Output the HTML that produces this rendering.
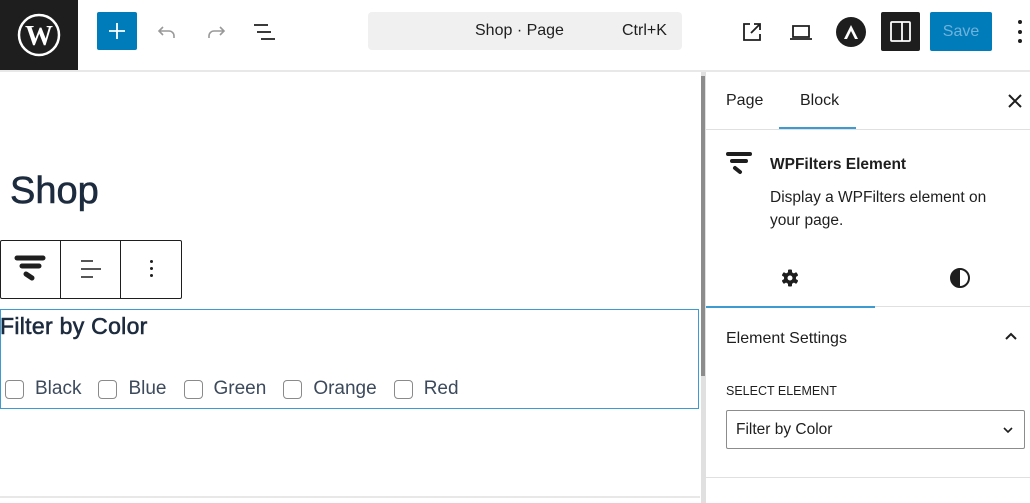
<!DOCTYPE html>
<html><head><style>
*{box-sizing:border-box;margin:0;padding:0}
body{width:1030px;height:503px;overflow:hidden;background:#fff;font-family:"Liberation Sans",sans-serif;color:#1e1e1e;position:relative}
.abs{position:absolute}
</style></head><body>
<!-- header -->
<div class="abs" style="left:0;top:0;width:78px;height:70px;background:#1e1e1e"></div>
<svg class="abs" style="left:17px;top:13px" width="44" height="44" viewBox="0 0 44 44"><circle cx="22" cy="22" r="20" fill="none" stroke="#fff" stroke-width="2.5"/><text x="22" y="32" text-anchor="middle" font-family="Liberation Serif" font-weight="bold" font-size="28" fill="#fff">W</text></svg>
<div class="abs" style="left:0;top:70px;width:1030px;height:2px;background:#e8e8e8"></div>
<div class="abs" style="left:97px;top:12px;width:40px;height:38px;background:#007cba;border-radius:2px"></div>
<svg class="abs" style="left:107px;top:21px" width="20" height="20" viewBox="0 0 20 20" stroke="#fff" stroke-width="1.8"><path d="M10 2v16M2 10h16"/></svg>
<svg class="abs" style="left:155px;top:20px" width="24" height="24" viewBox="0 0 24 24" fill="none" stroke="#999" stroke-width="1.6"><path d="M8 7l-4 4 4 4M4 11h10a5 5 0 0 1 5 5v2"/></svg>
<svg class="abs" style="left:204px;top:20px" width="24" height="24" viewBox="0 0 24 24" fill="none" stroke="#999" stroke-width="1.6"><path d="M16 7l4 4-4 4M20 11H10a5 5 0 0 0-5 5v2"/></svg>
<svg class="abs" style="left:252px;top:20px" width="26" height="24" viewBox="0 0 26 24" stroke="#1e1e1e" stroke-width="1.8"><path d="M2 5h14M5 12h14M9 19h14"/></svg>
<div class="abs" style="left:368px;top:12px;width:314px;height:38px;background:#f0f0f0;border-radius:4px"></div>
<div class="abs" style="left:475px;top:22px;font-size:16px;color:#1e1e1e">Shop · Page</div>
<div class="abs" style="left:622px;top:22px;font-size:16px;color:#1e1e1e">Ctrl+K</div>
<svg class="abs" style="left:740px;top:20px" width="24" height="24" viewBox="0 0 24 24" fill="none" stroke="#1e1e1e" stroke-width="1.8"><path d="M10 4H4v16h16v-6M14 4h6v6M20 4l-9 9"/></svg>
<svg class="abs" style="left:788px;top:20px" width="26" height="24" viewBox="0 0 26 24" fill="none" stroke="#1e1e1e" stroke-width="1.8"><path d="M5 6h16v11H5zM2 19h22"/></svg>
<div class="abs" style="left:836px;top:17px;width:30px;height:30px;border-radius:50%;background:#1e1e1e"></div>
<svg class="abs" style="left:836px;top:17px" width="30" height="30" viewBox="0 0 30 30"><path d="M15 8l7 14h-3l-4-8-4 8H8z" fill="#fff"/></svg>
<div class="abs" style="left:881px;top:12px;width:39px;height:39px;background:#1e1e1e;border-radius:2px"></div>
<svg class="abs" style="left:889px;top:20px" width="23" height="23" viewBox="0 0 23 23" fill="none" stroke="#fff" stroke-width="1.8"><rect x="2" y="2" width="19" height="19" rx="1"/><path d="M13 2v19"/></svg>
<div class="abs" style="left:930px;top:12px;width:62px;height:39px;background:#007cba;border-radius:2px;color:#6fb2dc;font-size:16px;line-height:39px;text-align:center">Save</div>
<div class="abs" style="left:1018px;top:20px;width:4px;height:4px;border-radius:2px;background:#1e1e1e"></div>
<div class="abs" style="left:1018px;top:30px;width:4px;height:4px;border-radius:2px;background:#1e1e1e"></div>
<div class="abs" style="left:1018px;top:39px;width:4px;height:4px;border-radius:2px;background:#1e1e1e"></div>
<!-- canvas -->
<div class="abs" style="left:10px;top:170px;font-size:38px;color:#1d2b3e;-webkit-text-stroke:0.6px #1d2b3e">Shop</div>
<div class="abs" style="left:0;top:240px;width:182px;height:59px;border:1px solid #1e1e1e;border-radius:2px"></div>
<div class="abs" style="left:60px;top:241px;width:1px;height:57px;background:#1e1e1e"></div>
<div class="abs" style="left:120px;top:241px;width:1px;height:57px;background:#1e1e1e"></div>
<svg class="abs" style="left:14px;top:254px" width="34" height="30" viewBox="0 0 34 30" stroke="#1e1e1e" stroke-linecap="round" fill="none"><path d="M3 4h26" stroke-width="5"/><path d="M8 12h17" stroke-width="5"/><path d="M12 20l6 4" stroke-width="5"/></svg>
<svg class="abs" style="left:78px;top:258px" width="26" height="24" viewBox="0 0 26 24" stroke="#1e1e1e" stroke-width="1.6"><path d="M3 3h12M3 11h20M3 19h12"/></svg>
<div class="abs" style="left:150px;top:260px;width:3px;height:3px;background:#1e1e1e;border-radius:2px;box-shadow:0 7px 0 #1e1e1e,0 14px 0 #1e1e1e"></div>
<div class="abs" style="left:0;top:309px;width:699px;height:100px;border:1.5px solid #3d9bd2"></div>
<div class="abs" style="left:0;top:313px;font-size:23px;color:#1d2b3e;-webkit-text-stroke:0.6px #1d2b3e;letter-spacing:0.3px">Filter by Color</div>
<div class="abs" style="left:5px;top:378px;font-size:19px;color:#3c4a5c;display:flex;align-items:center;white-space:nowrap">
<span style="width:19px;height:19px;border:1.3px solid #8a8a8a;border-radius:4px;margin-right:11px"></span>Black
<span style="width:19px;height:19px;border:1.3px solid #8a8a8a;border-radius:4px;margin:0 11px 0 17px"></span>Blue
<span style="width:19px;height:19px;border:1.3px solid #8a8a8a;border-radius:4px;margin:0 11px 0 17px"></span>Green
<span style="width:19px;height:19px;border:1.3px solid #8a8a8a;border-radius:4px;margin:0 11px 0 17px"></span>Orange
<span style="width:19px;height:19px;border:1.3px solid #8a8a8a;border-radius:4px;margin:0 11px 0 17px"></span>Red</div>
<div class="abs" style="left:0;top:496px;width:700px;height:2px;background:#e8e8e8"></div>
<!-- scrollbar -->
<div class="abs" style="left:701px;top:72px;width:4px;height:431px;background:#e0e0e0"></div>
<div class="abs" style="left:701px;top:76px;width:4px;height:300px;background:#8c8c8c"></div>
<!-- sidebar -->
<div class="abs" style="left:705px;top:72px;width:1px;height:431px;background:#e0e0e0"></div>
<div class="abs" style="left:726px;top:92px;font-size:16px">Page</div>
<div class="abs" style="left:800px;top:92px;font-size:16px">Block</div>
<div class="abs" style="left:779px;top:127px;width:77px;height:2px;background:#3d9bd2"></div>
<div class="abs" style="left:706px;top:129px;width:324px;height:1px;background:#e0e0e0"></div>
<svg class="abs" style="left:1007px;top:93px" width="16" height="16" viewBox="0 0 16 16" stroke="#1e1e1e" stroke-width="2"><path d="M2 2l12 12M14 2L2 14"/></svg>
<svg class="abs" style="left:725px;top:151px" width="30" height="28" viewBox="0 0 30 28" stroke="#1e1e1e" stroke-linecap="round" fill="none"><path d="M3 3h22" stroke-width="4"/><path d="M7 10h14" stroke-width="4"/><path d="M10 17l5 4" stroke-width="4"/></svg>
<div class="abs" style="left:770px;top:156px;font-size:15.5px;font-weight:bold">WPFilters Element</div>
<div class="abs" style="left:770px;top:186px;font-size:15.5px;line-height:23px;color:#1e1e1e;width:240px">Display a WPFilters element on your page.</div>
<svg class="abs" style="left:780px;top:268px" width="20" height="20" viewBox="0 0 20 20"><g fill="#1e1e1e"><circle cx="10" cy="10" r="6"/><rect x="8" y="1.5" width="4" height="17" rx="1"/><rect x="8" y="1.5" width="4" height="17" rx="1" transform="rotate(60 10 10)"/><rect x="8" y="1.5" width="4" height="17" rx="1" transform="rotate(120 10 10)"/></g><circle cx="10" cy="10" r="2.5" fill="#fff"/></svg>
<svg class="abs" style="left:949px;top:267px" width="22" height="22" viewBox="0 0 22 22"><circle cx="11" cy="11" r="9" fill="none" stroke="#1e1e1e" stroke-width="2"/><path d="M11 2a9 9 0 0 0 0 18z" fill="#1e1e1e"/></svg>
<div class="abs" style="left:706px;top:306px;width:169px;height:2px;background:#3d9bd2"></div>
<div class="abs" style="left:875px;top:306px;width:155px;height:1px;background:#e0e0e0"></div>
<div class="abs" style="left:726px;top:330px;font-size:16px;color:#1e1e1e">Element Settings</div>
<svg class="abs" style="left:1003px;top:331px" width="16" height="12" viewBox="0 0 16 12" fill="none" stroke="#1e1e1e" stroke-width="2"><path d="M3 8l5-5 5 5"/></svg>
<div class="abs" style="left:726px;top:384px;font-size:12.5px;color:#1e1e1e">SELECT ELEMENT</div>
<div class="abs" style="left:726px;top:410px;width:299px;height:39px;border:1px solid #8c8c8c;border-radius:2px"></div>
<div class="abs" style="left:736px;top:421px;font-size:15.5px">Filter by Color</div>
<svg class="abs" style="left:1002px;top:426px" width="12" height="8" viewBox="0 0 12 8" fill="none" stroke="#1e1e1e" stroke-width="1.6"><path d="M2 2l4 4 4-4"/></svg>
<div class="abs" style="left:706px;top:477px;width:324px;height:1px;background:#e0e0e0"></div>
</body></html>
